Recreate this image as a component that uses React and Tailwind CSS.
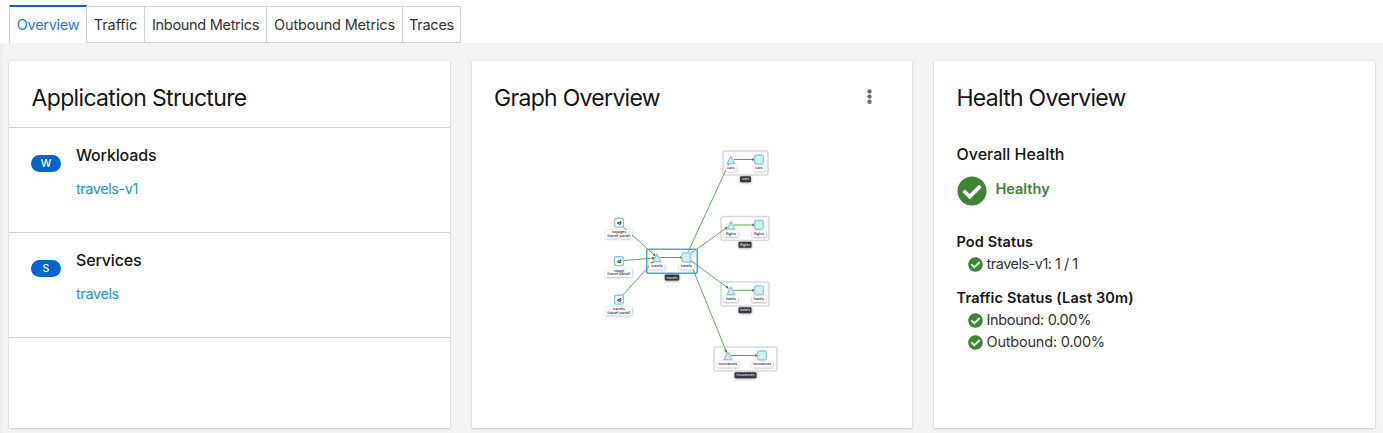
import React from "react";

const tabs = [
  { label: "Overview", box: "w-[78px]", text: "tracking-[-0.3px]" },
  { label: "Traffic", box: "w-[58px]", text: "tracking-[-0.1px]" },
  { label: "Inbound Metrics", box: "w-[122px]", text: "tracking-[-0.3px]" },
  { label: "Outbound Metrics", box: "w-[136px]", text: "tracking-[-0.17px]" },
  { label: "Traces", box: "w-[58px]", text: "tracking-[-0.25px]" },
];

function Tabs() {
  return (
    <nav className="flex h-[43px] shrink-0 bg-white pl-[9px] pt-[5px]">
      {tabs.map((t, i) => (
        <button
          key={t.label}
          className={
            i === 0
              ? "flex h-[38px] w-[78px] items-center justify-center whitespace-nowrap border-x border-t-2 border-x-[#d2d2d2] border-t-[#06c] text-[#1f7bdc]"
              : `mt-px flex h-[37px] items-center justify-center whitespace-nowrap border-y border-r border-[#d2d2d2] text-[#333] ${t.box}`
          }
        >
          <span className={t.text}>{t.label}</span>
        </button>
      ))}
    </nav>
  );
}

function Card({ children }) {
  return (
    <section className="flex h-[367px] flex-col bg-white shadow-[0_1px_2px_rgba(3,3,3,0.14),0_0_2px_rgba(3,3,3,0.08)]">
      {children}
    </section>
  );
}

function Title({ children, className }) {
  return (
    <h2 className={`whitespace-nowrap text-[23px] leading-[30px] text-[#151515] ${className}`}>{children}</h2>
  );
}

function StructureRow({ badge, title, link, titleClass, linkClass }) {
  return (
    <div className="flex h-[105px] border-b border-[#d2d2d2] pl-[22px]">
      <span className="mt-[27px] flex h-[17px] w-[30px] items-center justify-center rounded-full bg-[#06c] text-[10.5px] font-medium text-white">
        {badge}
      </span>
      <div className="ml-[15px] flex flex-col">
        <h3 className={`mt-[15px] text-[16px] font-medium leading-6 text-[#151515] ${titleClass}`}>{title}</h3>
        <a className={`mt-[11px] leading-[22px] text-[#2493d6] ${linkClass}`}>{link}</a>
      </div>
    </div>
  );
}

function Check({ className }) {
  return (
    <svg viewBox="0 0 512 512" className={`shrink-0 ${className}`} fill="#3e8635">
      <path d="M504 256c0 136.967-111.033 248-248 248S8 392.967 8 256 119.033 8 256 8s248 111.033 248 248zM227.314 387.314l184-184c6.248-6.248 6.248-16.379 0-22.627l-22.627-22.627c-6.248-6.249-16.379-6.249-22.628 0L216 308.118l-70.059-70.059c-6.248-6.248-16.379-6.248-22.628 0l-22.627 22.627c-6.248 6.248-6.248 16.379 0 22.627l104 104c6.249 6.249 16.379 6.249 22.628.001z" />
    </svg>
  );
}

function StatusLine({ children, className }) {
  return (
    <div className="flex h-[22px] items-center pl-[11px] text-[#333]">
      <Check className="size-[15px]" />
      <span className={`ml-[4px] whitespace-nowrap ${className}`}>{children}</span>
    </div>
  );
}

const groups = [
  { name: "cars", x: 723, y: 151, w: 45, h: 24, tx: 731, sx: 759, ty: 159.5, lw: 10.5, bw: 11 },
  { name: "flights", x: 721, y: 216.5, w: 48, h: 24, tx: 731, sx: 759, ty: 225, lw: 14, bw: 13 },
  { name: "hotels", x: 721, y: 282, w: 48, h: 24, tx: 731, sx: 759, ty: 290.3, lw: 14, bw: 13 },
  { name: "insurances", x: 714, y: 347, w: 63, h: 24, tx: 728, sx: 762, ty: 355.5, lw: 21, bw: 22 },
  { name: "travels", x: 646.7, y: 249.2, w: 50.6, h: 24, tx: 657, sx: 686.3, ty: 257.5, lw: 15, bw: 14.5, selected: true },
];

const clients = [
  { name: "voyages", y: 222.7 },
  { name: "viaggi", y: 261.2 },
  { name: "travels", y: 299.7 },
];

const edges = [
  [622, 226, 655, 255.5],
  [623, 260.7, 654, 258],
  [622, 296, 653, 262],
  [688, 252, 728.5, 164.5],
  [690, 254, 727, 227.5],
  [690, 260, 728, 288],
  [690, 262, 726.5, 352],
];

function Label({ x, y, w, text }) {
  return (
    <g>
      <rect x={x - w / 2} y={y - 3} width={w} height="6" rx="1" fill="#fff" filter="url(#lift)" />
      <text x={x} y={y + 1} textAnchor="middle" fontSize="3.5" fontWeight="500" fill="#151515">{text}</text>
    </g>
  );
}

function Group({ g }) {
  const mid = g.x + g.w / 2;
  return (
    <g>
      <line x1={g.tx + 3} y1={g.ty} x2={g.sx - 4.5} y2={g.ty} stroke="#5ba352" strokeWidth="1" markerEnd="url(#arrow)" />
      <path
        d={`M${g.tx} ${g.ty - 3.4}l3.9 7.6h-7.8z`}
        fill="#d3edfb"
        stroke="#8accf2"
        strokeWidth="1.3"
        strokeLinejoin="round"
      />
      <rect x={g.sx - 4.4} y={g.ty - 4.5} width="8.8" height="8.8" rx="2" fill="#d3edfb" stroke="#8accf2" strokeWidth="1.3" />
      <Label x={g.tx} y={g.ty + 8.8} w={g.lw} text={g.name} />
      <Label x={g.sx} y={g.ty + 8.8} w={g.lw} text={g.name} />
      <rect x={mid - g.bw / 2} y={g.y + g.h + 1.2} width={g.bw} height="6" rx="0.8" fill="#34373c" filter="url(#lift)" />
      <text x={mid} y={g.y + g.h + 5.4} textAnchor="middle" fontSize="3.5" fill="#fff">{g.name}</text>
    </g>
  );
}

function Graph() {
  return (
    <svg viewBox="472 127 440 265" className="h-[265px] w-[440px]" fontFamily="Inter, sans-serif">
      <defs>
        <marker id="arrow" viewBox="0 0 6 6" refX="4" refY="3" markerWidth="3.4" markerHeight="3.4" markerUnits="userSpaceOnUse" orient="auto">
          <path d="M0 .3 6 3 0 5.7z" fill="#3e8635" />
        </marker>
        <filter id="lift" x="-30%" y="-60%" width="160%" height="260%">
          <feDropShadow dx="0.2" dy="0.6" stdDeviation="0.8" floodOpacity="0.4" />
        </filter>
      </defs>
      {groups.map((g) => (
        <rect
          key={g.name}
          x={g.x}
          y={g.y}
          width={g.w}
          height={g.h}
          rx="2"
          fill="#fff"
          stroke={g.selected ? "#45a9e6" : "#dadada"}
          strokeWidth="1.6"
        />
      ))}
      {edges.map((e, i) => (
        <line key={i} x1={e[0]} y1={e[1]} x2={e[2]} y2={e[3]} stroke="#65a95d" strokeWidth="1" markerEnd="url(#arrow)" />
      ))}
      {groups.map((g) => (
        <Group key={g.name} g={g} />
      ))}
      {clients.map((c) => (
        <g key={c.name}>
          <rect x="614.6" y={c.y - 4.4} width="8.8" height="8.8" rx="1.8" fill="#fff" stroke="#82c8f0" strokeWidth="1.4" />
          <path d={`M617.2 ${c.y + 1.2}l1.2-1.9.7 .9 1.7-1.7v2.9h-2.2v-.7`} fill="none" stroke="#222" strokeWidth="0.9" />
          <rect x="605.8" y={c.y + 7.2} width="26" height="8.3" rx="1" fill="#fff" filter="url(#lift)" />
          <text x="618.9" y={c.y + 10.4} textAnchor="middle" fontSize="3.6" fontWeight="500" fill="#151515">{c.name}</text>
          <text x="618.9" y={c.y + 13.9} textAnchor="middle" fontSize="3.5" fontWeight="500" fill="#151515">(travel-portal)</text>
        </g>
      ))}
    </svg>
  );
}

export default function App() {
  return (
    <div className="flex h-[433px] w-[1383px] flex-col overflow-hidden bg-[#f4f4f4] font-['Inter',sans-serif] text-[14.5px] shadow-[inset_3px_0_4px_-2px_rgba(3,3,3,0.05)]">
      <Tabs />
      <main className="grid grid-cols-[440.5px_440.5px_440.5px] gap-x-[22px] pl-[9px] pt-[18px]">
        <Card>
          <header className="flex h-[67px] shrink-0 border-b border-[#d2d2d2] pl-[22.5px] pt-[22px]">
            <Title className="tracking-[-0.66px]">Application Structure</Title>
          </header>
          <StructureRow badge="W" title="Workloads" link="travels-v1" titleClass="tracking-[-0.15px]" linkClass="tracking-[-0.45px]" />
          <StructureRow badge="S" title="Services" link="travels" titleClass="tracking-[-0.15px]" linkClass="tracking-[-0.4px]" />
        </Card>
        <Card>
          <header className="flex h-[66px] shrink-0 justify-between pl-[22.5px] pr-[40.5px] pt-[22px]">
            <Title className="tracking-[-0.7px]">Graph Overview</Title>
            <button aria-label="Graph actions" className="mt-[6px] h-[15px] w-[5px]">
              <svg viewBox="0 0 5 15" className="h-[15px] w-[5px]" fill="#6a6e73">
                <circle cx="2.5" cy="2.4" r="2.2" />
                <circle cx="2.5" cy="7.6" r="2.2" />
                <circle cx="2.5" cy="12.8" r="2.2" />
              </svg>
            </button>
          </header>
          <Graph />
        </Card>
        <Card>
          <div className="flex flex-col pl-[22.5px] pt-[22px]">
            <Title className="tracking-[-0.72px]">Health Overview</Title>
            <h3 className="mt-[29px] text-[16px] font-medium leading-6 text-[#151515]">Overall Health</h3>
            <div className="mt-[10px] flex h-[30px] items-center">
              <Check className="size-[30px]" />
              <span className="mb-[4px] ml-[9px] font-semibold text-[#3e8635]">Healthy</span>
            </div>
            <h4 className="mt-[25px] font-semibold leading-[22px] tracking-[0.1px] text-[#151515]">Pod Status</h4>
            <StatusLine className="tracking-[-0.5px]">travels-v1: 1 / 1</StatusLine>
            <h4 className="mt-[12px] font-semibold leading-[22px] tracking-[0.13px] text-[#151515]">Traffic Status (Last 30m)</h4>
            <StatusLine className="tracking-[-0.35px]">Inbound: 0.00%</StatusLine>
            <StatusLine className="tracking-[-0.2px]">Outbound: 0.00%</StatusLine>
          </div>
        </Card>
      </main>
    </div>
  );
}
